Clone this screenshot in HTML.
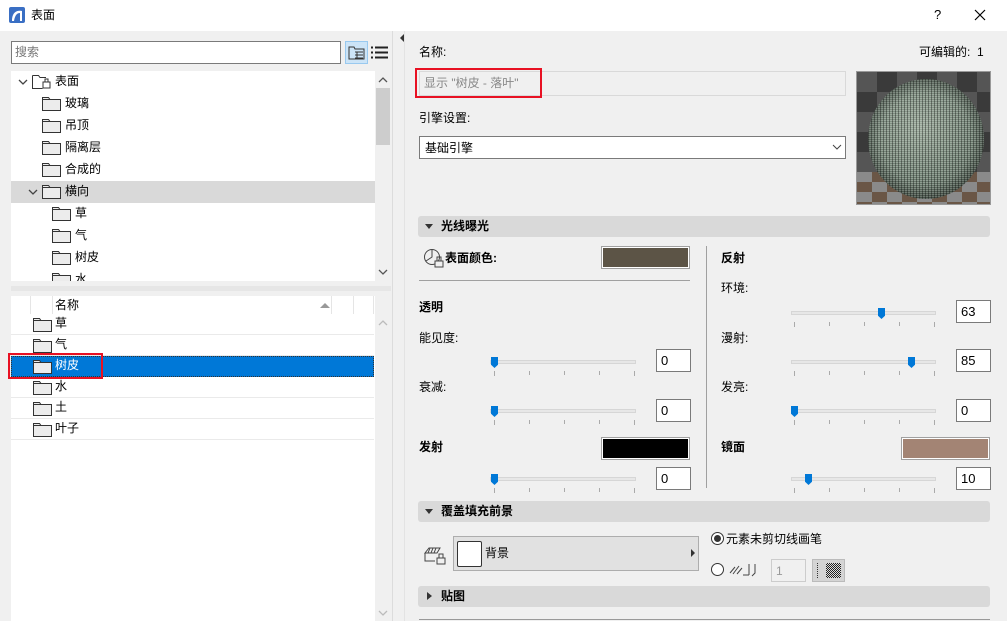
<!DOCTYPE html>
<html><head><meta charset="utf-8"><style>
*{box-sizing:border-box;margin:0;padding:0}
body{width:1007px;height:621px;overflow:hidden;background:#f0f0f0;font-family:"Liberation Sans","Noto Sans CJK SC",sans-serif;font-size:12px;color:#000;position:relative}
.a{position:absolute}
.t{position:absolute;line-height:14px;white-space:nowrap}
.b{font-weight:bold}
.sec{position:absolute;left:418px;width:572px;height:21px;background:#d9d9d9;border-radius:3px}
.sec span{position:absolute;left:23px;top:3px;font-weight:bold;line-height:15px}
.tri{position:absolute;left:7px;top:8px;width:0;height:0;border-left:4px solid transparent;border-right:4px solid transparent;border-top:5px solid #333}
.tri2{position:absolute;left:9px;top:6px;width:0;height:0;border-top:4px solid transparent;border-bottom:4px solid transparent;border-left:5px solid #333}
.inp{position:absolute;width:35px;height:23px;background:#fff;border:1px solid #7a7a7a;padding:3px 0 0 4px;font-size:13px;line-height:15px}
.trk{position:absolute;height:4px;background:#e7e7e7;border:1px solid #d6d6d6}
.th{position:absolute;width:7px;height:11px;background:#0078d7;clip-path:polygon(0 0,100% 0,100% 70%,50% 100%,0 70%)}
.ticks{position:absolute;height:5px;border-left:1px solid #aaa;border-right:1px solid #aaa}
.ticks i{position:absolute;top:0;width:1px;height:4px;background:#aaa}
.sw{position:absolute;width:89px;height:23px;border:1px solid #a0a0a0;box-shadow:inset 0 0 0 1px #fff}
.row{position:absolute;left:11px;width:363px;height:21px;border-bottom:1px solid #eaeaea}
</style></head><body>
<div class="a" style="left:0;top:0;width:1007px;height:31px;background:#fff"></div>
<svg class="a" style="left:9px;top:7px" width="16" height="16"><rect width="16" height="16" rx="2" fill="#3a6fc4"/><path d="M3 14 C3 5 8 3 13 4 L13 14 L11 14 L11 6 C8 6 6 8 5 14Z" fill="#fff"/></svg>
<div class="t" style="left:31px;top:8px">表面</div>
<div class="t" style="left:934px;top:8px;font-size:13px">?</div>
<svg class="a" style="left:974px;top:9px" width="12" height="12"><path d="M1 1L11 11M11 1L1 11" stroke="#000" stroke-width="1.2"/></svg>

<div class="a" style="left:11px;top:41px;width:330px;height:23px;background:#fff;border:1px solid #7a7a7a"></div>
<div class="t" style="left:15px;top:45px;color:#777">搜索</div>
<div class="a" style="left:345px;top:41px;width:23px;height:23px;background:#cce4f7;border:1px solid #99c9ef"></div>
<svg class="a" style="left:348px;top:45px" width="18" height="16"><path d="M1 2h5l1 2h9v10H1z" fill="none" stroke="#333"/><path d="M7 7h8M7 10h8M7 13h8M9 7v7" stroke="#333"/></svg>
<svg class="a" style="left:371px;top:46px" width="17" height="13"><path d="M0 1.5h2M4 1.5h13M0 6.5h2M4 6.5h13M0 11.5h2M4 11.5h13" stroke="#222" stroke-width="2"/></svg>

<div class="a" style="left:11px;top:71px;width:364px;height:210px;background:#fff;overflow:hidden">
 <div class="a" style="left:0;top:110px;width:364px;height:22px;background:#d9d9d9"></div>
</div>
<div class="a" style="left:375px;top:71px;width:16px;height:210px;background:#f0f0f0"></div>
<div class="a" style="left:376px;top:88px;width:14px;height:57px;background:#cdcdcd"></div>
<svg class="a" style="left:378px;top:76px" width="10" height="8"><path d="M1 6L5 2L9 6" fill="none" stroke="#555" stroke-width="1.3"/></svg>
<svg class="a" style="left:378px;top:268px" width="10" height="8"><path d="M1 2L5 6L9 2" fill="none" stroke="#555" stroke-width="1.3"/></svg>

<svg width="0" height="0" style="position:absolute"><defs><symbol id="f" viewBox="0 0 19 15"><path d="M0.5 1.5h6l1.5 2h10.5v11H0.5z" fill="#ececec" stroke="#333"/><path d="M0.5 3.5h7.5" stroke="#333"/></symbol></defs></svg>

<svg class="a" style="left:18px;top:78px" width="10" height="8"><path d="M1 2L5 6L9 2" fill="none" stroke="#444" stroke-width="1.3"/></svg>
<svg class="a" style="left:32px;top:74px" width="19" height="15"><path d="M0.5 1.5h6l1.5 2h6" fill="none" stroke="#333"/><path d="M0.5 1.5v13h10" fill="none" stroke="#333"/><rect x="11" y="8" width="7" height="6" fill="none" stroke="#333"/><path d="M13 8V5h3v3" fill="none" stroke="#333"/></svg>
<div class="t" style="left:55px;top:74px">表面</div>

<svg class="a" style="left:42px;top:96px" width="19" height="15"><use href="#f"/></svg><div class="t" style="left:65px;top:96px">玻璃</div>
<svg class="a" style="left:42px;top:118px" width="19" height="15"><use href="#f"/></svg><div class="t" style="left:65px;top:118px">吊顶</div>
<svg class="a" style="left:42px;top:140px" width="19" height="15"><use href="#f"/></svg><div class="t" style="left:65px;top:140px">隔离层</div>
<svg class="a" style="left:42px;top:162px" width="19" height="15"><use href="#f"/></svg><div class="t" style="left:65px;top:162px">合成的</div>
<svg class="a" style="left:28px;top:188px" width="10" height="8"><path d="M1 2L5 6L9 2" fill="none" stroke="#444" stroke-width="1.3"/></svg>
<svg class="a" style="left:42px;top:184px" width="19" height="15"><use href="#f"/></svg><div class="t" style="left:65px;top:184px">横向</div>
<svg class="a" style="left:52px;top:206px" width="19" height="15"><use href="#f"/></svg><div class="t" style="left:75px;top:206px">草</div>
<svg class="a" style="left:52px;top:228px" width="19" height="15"><use href="#f"/></svg><div class="t" style="left:75px;top:228px">气</div>
<svg class="a" style="left:52px;top:250px" width="19" height="15"><use href="#f"/></svg><div class="t" style="left:75px;top:250px">树皮</div>
<div class="a" style="left:11px;top:270px;width:364px;height:11px;overflow:hidden"><svg class="a" style="left:41px;top:2px" width="19" height="15"><use href="#f"/></svg><div class="t" style="left:64px;top:2px">水</div></div>

<div class="a" style="left:11px;top:286px;width:380px;height:5px;background:#e6e6e6"></div>

<div class="a" style="left:11px;top:296px;width:364px;height:325px;background:#fff"></div>
<div class="a" style="left:30px;top:296px;width:1px;height:18px;background:#e5e5e5"></div>
<div class="a" style="left:52px;top:296px;width:1px;height:18px;background:#e5e5e5"></div>
<div class="a" style="left:331px;top:296px;width:1px;height:18px;background:#e5e5e5"></div>
<div class="a" style="left:353px;top:296px;width:1px;height:18px;background:#e5e5e5"></div>
<div class="a" style="left:373px;top:296px;width:1px;height:18px;background:#e5e5e5"></div>
<div class="t" style="left:55px;top:298px">名称</div>
<div class="a" style="left:320px;top:303px;border-left:5px solid transparent;border-right:5px solid transparent;border-bottom:5px solid #999"></div>
<div class="row" style="top:314px"></div>
<div class="row" style="top:335px"></div>
<div class="row" style="top:356px;background:#0078d7;border:1px dotted #333"></div>
<div class="row" style="top:377px"></div>
<div class="row" style="top:398px"></div>
<div class="row" style="top:419px"></div>
<svg class="a" style="left:33px;top:317px" width="19" height="15"><use href="#f"/></svg><div class="t" style="left:55px;top:316px">草</div>
<svg class="a" style="left:33px;top:338px" width="19" height="15"><use href="#f"/></svg><div class="t" style="left:55px;top:337px">气</div>
<svg class="a" style="left:33px;top:359px" width="19" height="15"><use href="#f"/></svg><div class="t" style="left:55px;top:358px;color:#fff">树皮</div>
<svg class="a" style="left:33px;top:380px" width="19" height="15"><use href="#f"/></svg><div class="t" style="left:55px;top:379px">水</div>
<svg class="a" style="left:33px;top:401px" width="19" height="15"><use href="#f"/></svg><div class="t" style="left:55px;top:400px">土</div>
<svg class="a" style="left:33px;top:422px" width="19" height="15"><use href="#f"/></svg><div class="t" style="left:55px;top:421px">叶子</div>
<div class="a" style="left:8px;top:353px;width:95px;height:26px;border:2px solid #e81123"></div>
<svg class="a" style="left:378px;top:319px" width="10" height="8"><path d="M1 6L5 2L9 6" fill="none" stroke="#bbb" stroke-width="1.3"/></svg>
<svg class="a" style="left:378px;top:609px" width="10" height="8"><path d="M1 2L5 6L9 2" fill="none" stroke="#bbb" stroke-width="1.3"/></svg>

<div class="a" style="left:392px;top:31px;width:1px;height:590px;background:#dcdcdc"></div>
<div class="a" style="left:400px;top:34px;border-top:4px solid transparent;border-bottom:4px solid transparent;border-right:4px solid #333"></div>
<div class="a" style="left:404px;top:31px;width:1px;height:590px;background:#e3e3e3"></div>

<div class="t" style="left:419px;top:45px">名称:</div>
<div class="t" style="left:919px;top:45px">可编辑的: &nbsp;1</div>
<div class="a" style="left:419px;top:71px;width:427px;height:25px;background:#f0f0f0;border:1px solid #d9d9d9"></div>
<div class="t" style="left:424px;top:76px;color:#888">显示 "树皮 - 落叶"</div>
<div class="a" style="left:415px;top:68px;width:127px;height:30px;border:2px solid #e81123"></div>
<div class="t" style="left:419px;top:111px">引擎设置:</div>
<div class="a" style="left:419px;top:136px;width:427px;height:23px;background:#fff;border:1px solid #7a7a7a"></div>
<div class="t" style="left:425px;top:141px">基础引擎</div>
<svg class="a" style="left:832px;top:144px" width="10" height="7"><path d="M1 1L5 5L9 1" fill="none" stroke="#444"/></svg>

<div class="a" style="left:856px;top:71px;width:135px;height:134px;border:1px solid #999;overflow:hidden;background:
 repeating-conic-gradient(#3a3a3a 0 25%,#555 0 50%) 0 0/40px 40px">
 <div class="a" style="left:0;top:100px;width:135px;height:35px;background:repeating-conic-gradient(#6a5646 0 25%,#8a8a8a 0 50%) 0 0/30px 20px"></div>
 <div class="a" style="left:11px;top:7px;width:116px;height:120px;border-radius:50%;background:
  radial-gradient(circle at 50% 50%,transparent 55%,rgba(0,0,0,.65) 100%),
  repeating-linear-gradient(90deg,rgba(0,0,0,.35) 0 1px,transparent 1px 3px),
  repeating-linear-gradient(0deg,rgba(220,230,220,.35) 0 1px,transparent 1px 2px),
  radial-gradient(circle at 45% 40%,#9aa89a,#6f7f72 50%,#3f4c42)"></div>
</div>

<div class="sec" style="top:216px"><div class="tri"></div><span>光线曝光</span></div>
<svg class="a" style="left:423px;top:248px" width="22" height="21"><circle cx="9" cy="9" r="7.5" fill="none" stroke="#444"/><path d="M9 1.5V9L3 13" fill="none" stroke="#444"/><rect x="12" y="13" width="8" height="6" fill="#f0f0f0" stroke="#444"/><path d="M14 13v-4h4v4" fill="none" stroke="#444"/></svg>
<div class="t b" style="left:445px;top:251px">表面颜色:</div>
<div class="sw" style="left:601px;top:246px;background:#5c5446"></div>
<div class="a" style="left:419px;top:280px;width:271px;height:1px;background:#a0a0a0"></div>
<div class="t b" style="left:419px;top:300px">透明</div>
<div class="t" style="left:419px;top:331px">能见度:</div>
<div class="t" style="left:419px;top:380px">衰减:</div>
<div class="t b" style="left:419px;top:440px">发射</div>
<div class="sw" style="left:601px;top:437px;background:#000"></div>
<div class="a" style="left:706px;top:246px;width:1px;height:242px;background:#a0a0a0"></div>
<div class="t b" style="left:721px;top:251px">反射</div>
<div class="t" style="left:721px;top:281px">环境:</div>
<div class="t" style="left:721px;top:331px">漫射:</div>
<div class="t" style="left:721px;top:380px">发亮:</div>
<div class="t b" style="left:721px;top:440px">镜面</div>
<div class="sw" style="left:901px;top:437px;background:#a38474"></div>

<div class="trk" style="left:490px;top:360px;width:146px"></div><div class="th" style="left:491px;top:357px"></div><div class="ticks" style="left:494px;top:371px;width:141px"><i style="left:34px"></i><i style="left:69px"></i><i style="left:104px"></i></div>
<div class="inp" style="left:656px;top:349px">0</div>
<div class="trk" style="left:490px;top:409px;width:146px"></div><div class="th" style="left:491px;top:406px"></div><div class="ticks" style="left:494px;top:420px;width:141px"><i style="left:34px"></i><i style="left:69px"></i><i style="left:104px"></i></div>
<div class="inp" style="left:656px;top:399px">0</div>
<div class="trk" style="left:490px;top:477px;width:146px"></div><div class="th" style="left:491px;top:474px"></div><div class="ticks" style="left:494px;top:488px;width:141px"><i style="left:34px"></i><i style="left:69px"></i><i style="left:104px"></i></div>
<div class="inp" style="left:656px;top:467px">0</div>
<div class="trk" style="left:791px;top:311px;width:145px"></div><div class="th" style="left:878px;top:308px"></div><div class="ticks" style="left:794px;top:322px;width:141px"><i style="left:34px"></i><i style="left:69px"></i><i style="left:104px"></i></div>
<div class="inp" style="left:956px;top:300px">63</div>
<div class="trk" style="left:791px;top:360px;width:145px"></div><div class="th" style="left:908px;top:357px"></div><div class="ticks" style="left:794px;top:371px;width:141px"><i style="left:34px"></i><i style="left:69px"></i><i style="left:104px"></i></div>
<div class="inp" style="left:956px;top:349px">85</div>
<div class="trk" style="left:791px;top:409px;width:145px"></div><div class="th" style="left:791px;top:406px"></div><div class="ticks" style="left:794px;top:420px;width:141px"><i style="left:34px"></i><i style="left:69px"></i><i style="left:104px"></i></div>
<div class="inp" style="left:956px;top:399px">0</div>
<div class="trk" style="left:791px;top:477px;width:145px"></div><div class="th" style="left:805px;top:474px"></div><div class="ticks" style="left:794px;top:488px;width:141px"><i style="left:34px"></i><i style="left:69px"></i><i style="left:104px"></i></div>
<div class="inp" style="left:956px;top:467px">10</div>

<div class="sec" style="top:501px"><div class="tri"></div><span>覆盖填充前景</span></div>
<svg class="a" style="left:424px;top:545px" width="22" height="21"><path d="M1 8h12l3-5H5z" fill="none" stroke="#444"/><path d="M1 8v8h10" fill="none" stroke="#444"/><path d="M6 3l-2 5M9 3l-2 5M12 3l-2 5" stroke="#444"/><rect x="13" y="13" width="8" height="6" fill="#f0f0f0" stroke="#444"/><path d="M15 13v-4h4v4" fill="none" stroke="#444"/></svg>
<div class="a" style="left:453px;top:536px;width:246px;height:35px;background:#e1e1e1;border:1px solid #adadad"></div>
<div class="a" style="left:457px;top:541px;width:25px;height:26px;background:#fff;border:1px solid #333;border-radius:2px"></div>
<div class="t" style="left:485px;top:546px">背景</div>
<div class="a" style="left:691px;top:549px;border-top:4px solid transparent;border-bottom:4px solid transparent;border-left:4px solid #333"></div>
<div class="a" style="left:711px;top:532px;width:13px;height:13px;border:1px solid #333;border-radius:50%;background:#fff"></div>
<div class="a" style="left:714px;top:535px;width:7px;height:7px;border-radius:50%;background:#333"></div>
<div class="t" style="left:726px;top:532px">元素未剪切线画笔</div>
<div class="a" style="left:711px;top:563px;width:13px;height:13px;border:1px solid #333;border-radius:50%;background:#fff"></div>
<svg class="a" style="left:729px;top:561px" width="30" height="16"><path d="M1 12l5-6M4 13l6-8M8 13l5-6" stroke="#444"/><path d="M14 14h6M20 14V3M26 3v9l-3 3" fill="none" stroke="#444"/></svg>
<div class="a" style="left:771px;top:559px;width:35px;height:23px;background:#f0f0f0;border:1px solid #ccc"></div>
<div class="t" style="left:776px;top:564px;color:#999">1</div>
<div class="a" style="left:812px;top:559px;width:33px;height:23px;background:#d4d4d4;border:1px solid #bbb"></div>
<div class="a" style="left:817px;top:563px;width:1px;height:15px;border-left:1px dotted #333"></div>
<div class="a" style="left:826px;top:563px;width:15px;height:15px;background:repeating-conic-gradient(#222 0 25%,#ddd 0 50%) 0 0/2px 2px"></div>

<div class="sec" style="top:586px"><div class="tri2"></div><span>贴图</span></div>
<div class="a" style="left:419px;top:619px;width:571px;height:1px;background:#999"></div>
</body></html>
